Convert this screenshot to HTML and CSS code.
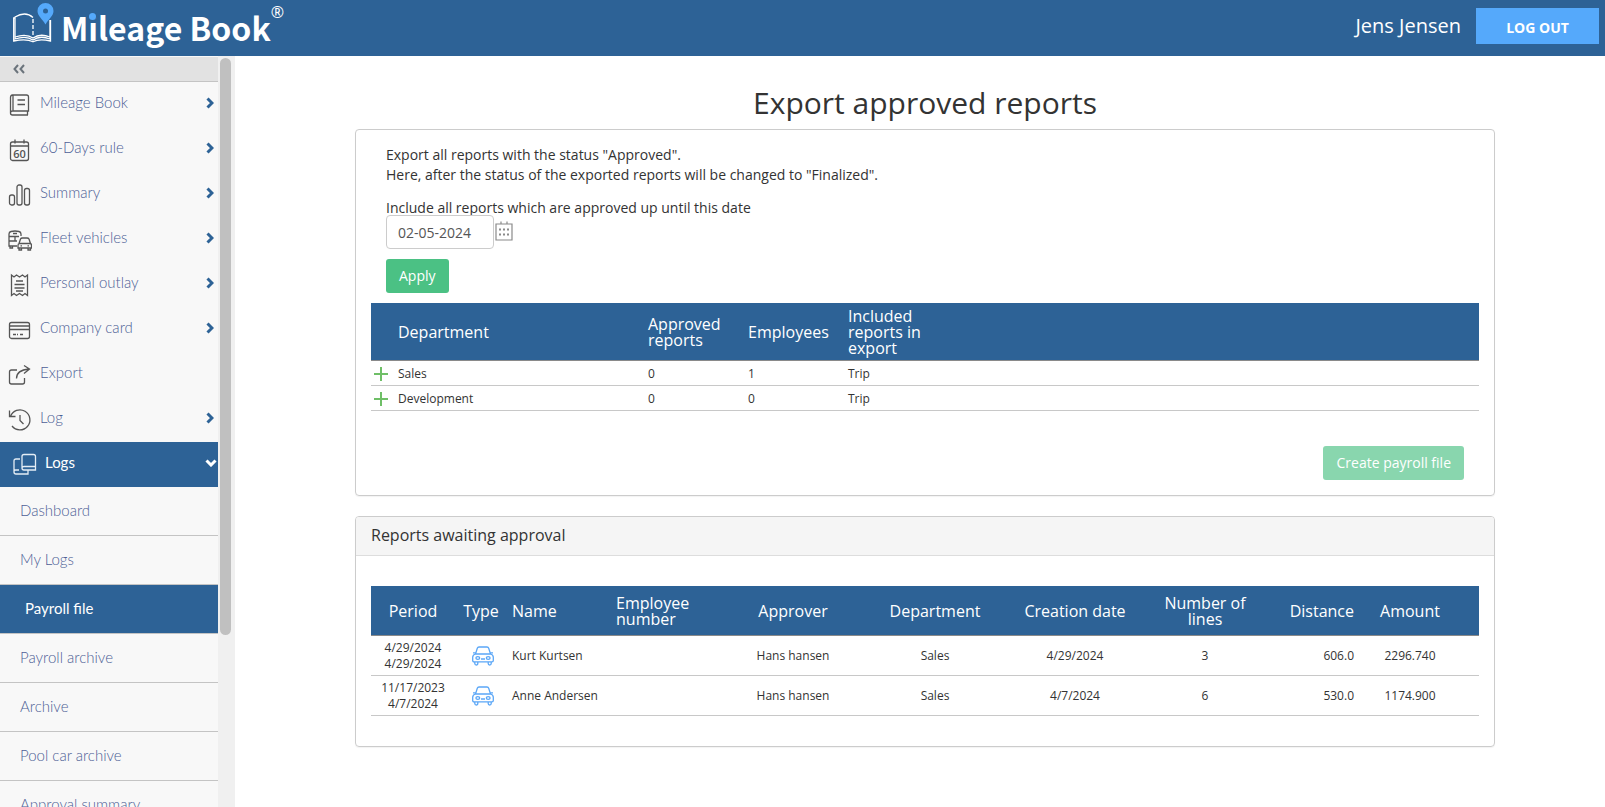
FILE: index.html
```html
<!DOCTYPE html>
<html lang="en">
<head>
  <meta charset="UTF-8">
  <meta name="viewport" content="width=device-width, initial-scale=1.0">
  <title>Mileage Book - Payroll file</title>
  <link rel="stylesheet" href="styles.css">
</head>
<body>
  <svg class="sprite" aria-hidden="true">
    <symbol id="chevron" viewBox="0 0 8 12">
      <path d="M1.5 1.5 6 6 1.5 10.500" fill="none" stroke="currentColor" stroke-width="3"/>
    </symbol>
    <symbol id="plus" viewBox="0 0 14 14">
      <path d="M7 0v14M0 7h14" fill="none" stroke="#6fbf67" stroke-width="2"/>
    </symbol>
    <symbol id="car" viewBox="0 0 22 20">
      <g fill="none" stroke="#5ba7f7" stroke-width="1.300" stroke-linejoin="round">
        <path d="M3.500 8 5.300 2.200Q5.700 1 7 1h8q1.300 0 1.700 1.200L18.500 8"/>
        <path d="M3.500 8h15q2.800.8 2.800 3.300v3.200q0 1.300-1.300 1.300H2q-1.300 0-1.300-1.300v-3.200Q.7 8.800 3.500 8z"/>
        <path d="M1 6.800h2.800M18.200 6.800H21M9 13h4"/>
        <ellipse cx="5.800" cy="12" rx="1.900" ry="1.300"/>
        <ellipse cx="16.200" cy="12" rx="1.900" ry="1.300"/>
        <path d="M2.800 16v1.500q0 1.500 1.500 1.500t1.500-1.500V16M16.200 16v1.500q0 1.500 1.500 1.500t1.500-1.500V16"/>
      </g>
    </symbol>
  </svg>

  <header class="topbar">
    <a class="logo" href="#">
      <svg class="logo-icon" width="42" height="42" viewBox="0 0 42 42" fill="none" stroke="#fff" stroke-width="1.300">
        <path d="M21 14.500C16 10 9 10.500 3 14v22c6-2 13-2.500 18 1 5-3.500 12-3 17-1V17"/>
        <path d="M3 34c6-2 13-2.500 18 1 5-3.500 12-3 17-1"/>
        <path d="M3 15H1.700v23c7-1.500 14-2 19.300.8 5-2.800 11-2.300 17.500-.8V17"/>
        <path d="M21 16v18" stroke-dasharray="4 2"/>
        <path d="M33.500 0a8 8 0 0 0-8 8c0 5 5 8 8 13.500 3-5.500 8-8.500 8-13.500a8 8 0 0 0-8-8z" fill="#55a9fb" stroke="none"/>
        <circle cx="33.500" cy="8" r="2.500" fill="#2d6296" stroke="none"/>
      </svg>
      <span class="logo-text">M<span class="logo-i">i</span>leage Book</span><span class="logo-reg">®</span>
    </a>
    <div class="user">
      <span class="user-name">Jens Jensen</span>
      <button class="logout" type="button">LOG OUT</button>
    </div>
  </header>

  <div class="page">
    <nav class="sidebar">
      <div class="menu">
        <button class="collapse" type="button" aria-label="Collapse menu">
          <svg width="12" height="10" viewBox="0 0 12 10"><path d="M5 1 1.500 5 5 9M11 1 7.500 5 11 9" fill="none" stroke="#6b747c" stroke-width="2"/></svg>
        </button>
        <a class="item" href="#">
          <svg class="icon" viewBox="0 0 24 24"><path d="M5 18V2H4.500Q2.500 2 2.500 4.500V20q0 2 2 2H20M5 2h13.500q2 0 2 2v14H4.500q-2 0-2 2M19.500 18v4M9.500 7H17M9.500 11.500H17"/></svg>
          <span>Mileage Book</span><svg class="arrow"><use href="#chevron"/></svg>
        </a>
        <a class="item" href="#">
          <svg class="icon" viewBox="0 0 24 24"><rect x="2.500" y="4" width="18" height="18.500" rx="2"/><path d="M2.500 8h18M7 1.500v4M16 1.500v4"/><text class="icon-text" x="11.500" y="19.500">60</text></svg>
          <span>60-Days rule</span><svg class="arrow"><use href="#chevron"/></svg>
        </a>
        <a class="item" href="#">
          <svg class="icon" viewBox="0 0 24 24"><rect x="1.500" y="12" width="5" height="10" rx="2"/><rect x="9" y="2" width="5" height="20" rx="2"/><rect x="16.500" y="5.500" width="5" height="16.500" rx="2"/></svg>
          <span>Summary</span><svg class="arrow"><use href="#chevron"/></svg>
        </a>
        <a class="item" href="#">
          <svg class="icon" viewBox="0 0 24 24"><path d="M9 18H1V6q0-2 2-2.500 4-1 8 0 2 .5 2 2.500v2M1 8.500h10M5 5.500h4M1 13h8M7 8.500V13M2 18v2h2.500v-2M11 15.500l1.500-4.500q.5-1 2-1h4.500q1.500 0 2 1l1.500 4.500M10 17.500q0-2 1.500-2h10.500q1.500 0 1.500 2V20H10zM11 20v2h2.500v-2M20 20v2h2.500v-2M12.500 17.800H14M19.500 17.800H21"/></svg>
          <span>Fleet vehicles</span><svg class="arrow"><use href="#chevron"/></svg>
        </a>
        <a class="item" href="#">
          <svg class="icon" viewBox="0 0 24 24"><path d="M3.500 2v20.500l2.500-2 2.500 2 3-2 3 2 2.500-2 2.500 2V2L17 4l-2.500-2-3 2-3-2L6 4zM8 8h7M6.500 11.500h10M6.500 15h10M8 18h7"/></svg>
          <span>Personal outlay</span><svg class="arrow"><use href="#chevron"/></svg>
        </a>
        <a class="item" href="#">
          <svg class="icon" viewBox="0 0 24 24"><rect x="1.500" y="4.500" width="20" height="16" rx="2"/><path d="M1.500 8h20M1.500 11.500h20M5 16.500h3M9 16.500h1M12 16.500h3"/></svg>
          <span>Company card</span><svg class="arrow"><use href="#chevron"/></svg>
        </a>
        <a class="item" href="#">
          <svg class="icon" viewBox="0 0 24 24"><path d="M9 7H3.500q-2 0-2 2v10q0 2 2 2h11q2 0 2-2v-4M8.500 15.500q0-8.500 12.500-9.500M16 2.500 21.500 6 16 10.500"/></svg>
          <span>Export</span>
        </a>
        <a class="item" href="#">
          <svg class="icon" viewBox="0 0 24 24"><path d="M2.500 8.500A10 10 0 1 1 4 18M1.500 2.500v6h6M12 7v5.500l3.500 3.500"/></svg>
          <span>Log</span><svg class="arrow"><use href="#chevron"/></svg>
        </a>
        <a class="item open" href="#">
          <svg class="icon" viewBox="0 0 24 24"><path d="M9 15V3.500q0-2 2-2h9.500q2 0 2 2V17H11q-2 0-2-2 0-1.500 2-1.500h11.500M7 6H3Q1 6 1 8v11q0 2 2 2h12v-4M1 18.500q0-1.500 1.500-1.500H6"/></svg>
          <span>Logs</span><svg class="arrow"><use href="#chevron"/></svg>
        </a>
        <a class="subitem" href="#">Dashboard</a>
        <a class="subitem" href="#">My Logs</a>
        <a class="subitem active" href="#">Payroll file</a>
        <a class="subitem" href="#">Payroll archive</a>
        <a class="subitem" href="#">Archive</a>
        <a class="subitem" href="#">Pool car archive</a>
        <a class="subitem" href="#">Approval summary</a>
      </div>
      <div class="scrollbar"><div class="thumb"></div></div>
    </nav>

    <main class="content">
      <h1>Export approved reports</h1>

      <section class="panel export">
        <div class="export-form">
          <p>Export all reports with the status "Approved".<br>Here, after the status of the exported reports will be changed to "Finalized".</p>
          <label for="untilDate">Include all reports which are approved up until this date</label>
          <div class="date-row">
            <input id="untilDate" type="text" value="02-05-2024">
            <button class="calendar" type="button" aria-label="Pick a date">
              <svg width="18" height="20" viewBox="0 0 18 20" fill="none" stroke="#8a8a8a"><path d="M1 3h16v16H1zM6 .5v3M12 .5v3" stroke-width="1.200"/><path d="M4 8.500h10M4 13.500h10" stroke-width="2" stroke-dasharray="2"/></svg>
            </button>
          </div>
          <button class="btn" type="button">Apply</button>
        </div>

        <table class="departments">
          <colgroup><col class="w-plus"><col class="w-dept"><col class="w-num"><col class="w-num"><col class="w-num"><col></colgroup>
          <thead>
            <tr><th></th><th>Department</th><th>Approved reports</th><th>Employees</th><th>Included reports in export</th><th></th></tr>
          </thead>
          <tbody>
            <tr><td><button class="expand" type="button" aria-label="Expand Sales"><svg><use href="#plus"/></svg></button></td><td>Sales</td><td>0</td><td>1</td><td>Trip</td><td></td></tr>
            <tr><td><button class="expand" type="button" aria-label="Expand Development"><svg><use href="#plus"/></svg></button></td><td>Development</td><td>0</td><td>0</td><td>Trip</td><td></td></tr>
          </tbody>
        </table>

        <div class="actions">
          <button class="btn" type="button" disabled>Create payroll file</button>
        </div>
      </section>

      <section class="panel">
        <h2>Reports awaiting approval</h2>
        <div class="panel-body">
          <table class="awaiting">
            <colgroup><col class="c-period"><col class="c-type"><col class="c-name"><col class="c-empno"><col class="c-approver"><col class="c-dept"><col class="c-created"><col class="c-lines"><col class="c-distance"><col class="c-amount"><col></colgroup>
            <thead>
              <tr><th>Period</th><th>Type</th><th class="left">Name</th><th class="left">Employee number</th><th>Approver</th><th>Department</th><th>Creation date</th><th>Number of lines</th><th class="right">Distance</th><th>Amount</th><th></th></tr>
            </thead>
            <tbody>
              <tr><td>4/29/2024<br>4/29/2024</td><td><svg class="car"><use href="#car"/></svg></td><td class="left">Kurt Kurtsen</td><td></td><td>Hans hansen</td><td>Sales</td><td>4/29/2024</td><td>3</td><td class="right">606.0</td><td>2296.740</td><td></td></tr>
              <tr><td>11/17/2023<br>4/7/2024</td><td><svg class="car"><use href="#car"/></svg></td><td class="left">Anne Andersen</td><td></td><td>Hans hansen</td><td>Sales</td><td>4/7/2024</td><td>6</td><td class="right">530.0</td><td>1174.900</td><td></td></tr>
            </tbody>
          </table>
        </div>
      </section>
    </main>
  </div>
</body>
</html>
```
FILE: styles.css
```css
* {
  box-sizing: border-box;
}
body {
  display: flex;
  flex-direction: column;
  height: 100vh;
  margin: 0;
  overflow: hidden;
  background-color: #fff;
  color: #333;
  font-family: "Open Sans", "Noto Sans", sans-serif;
  font-size: 14px;
  line-height: 20px;
}
button, input {
  font-family: inherit;
  font-size: 14px;
}
button {
  cursor: pointer;
}
a {
  text-decoration: none;
}
.sprite {
  display: none;
}

/* top bar */
.topbar {
  display: flex;
  flex-shrink: 0;
  justify-content: space-between;
  height: 56px;
  padding-right: 6px;
  background-color: #2d6296;
  color: #fff;
}
.logo {
  display: flex;
  padding: 3px 0 0 12px;
  color: #fff;
}
.logo-text {
  margin-left: 7px;
  font-family: "Noto Sans CJK SC", "Open Sans", sans-serif;
  font-size: 32px;
  font-weight: bold;
  line-height: 48px;
}
.logo-i {
  position: relative;
}
.logo-i::before {
  content: "";
  position: absolute;
  top: 9px;
  left: 1px;
  width: 7px;
  height: 7px;
  border-radius: 50%;
  background-color: #55a9fb;
  box-shadow: 0 0 0 1px #2d6296;
}
.logo-reg {
  font-size: 16px;
  line-height: 18px;
}
.user {
  display: flex;
  align-items: center;
  gap: 15px;
  padding-bottom: 4px;
}
.user-name {
  font-size: 20px;
}
.logout {
  width: 123px;
  height: 36px;
  padding-top: 4px;
  border: none;
  background-color: #55a9fb;
  color: #fff;
  font-weight: 700;
}

/* sidebar */
.page {
  display: flex;
  flex: 1;
  min-height: 0;
}
.sidebar {
  display: flex;
  flex-shrink: 0;
  width: 235px;
  overflow: hidden;
}
.menu {
  width: 218px;
  padding-top: 1px;
  background-color: #f8f8f8;
}
.collapse {
  display: flex;
  align-items: center;
  width: 100%;
  height: 25px;
  padding: 0 13px;
  border: none;
  border-bottom: 1px solid #c4c4c4;
  background-color: #e2e2e2;
}
.item {
  display: flex;
  align-items: center;
  height: 45px;
  padding: 0 4px 0 8px;
  color: #4d5f96;
  font-family: Lato, sans-serif;
  font-size: 15px;
  font-weight: 300;
}
.item span {
  flex: 1;
  padding: 0 0 5px 8px;
}
.icon {
  width: 24px;
  height: 24px;
  fill: none;
  stroke: #555;
  stroke-width: 1.3;
}
.icon-text {
  fill: #555;
  stroke: none;
  font-family: "Open Sans", sans-serif;
  font-size: 11px;
  font-weight: 600;
  text-anchor: middle;
}
.arrow {
  width: 8px;
  height: 12px;
  margin-bottom: 3px;
  color: #2d6296;
}
.item.open {
  padding: 0 3px 0 13px;
  background-color: #2d6296;
  color: #fff;
  font-weight: 400;
}
.item.open .icon {
  stroke: #e4edf5;
}
.item.open .arrow {
  color: #fff;
  transform: rotate(90deg);
}
.subitem {
  display: block;
  height: 49px;
  padding-left: 20px;
  border-bottom: 1px solid #c4c4c4;
  color: #4d5f96;
  font-family: Lato, sans-serif;
  font-size: 15px;
  font-weight: 300;
  line-height: 46px;
}
.subitem.active {
  padding-left: 25px;
  background-color: #2d6296;
  color: #fff;
  font-weight: 400;
}
.scrollbar {
  flex: 1;
  padding: 2px 4px 0 2px;
  background-color: #f0f0f0;
}
.thumb {
  height: 77%;
  border-radius: 6px;
  background-color: #c0c0c0;
}

/* content */
.content {
  flex: 1;
  padding: 30px 110px 0 120px;
}
h1 {
  margin: 0 0 10px;
  font-size: 30px;
  font-weight: 400;
  line-height: 33px;
  text-align: center;
}
.panel {
  margin-bottom: 20px;
  border: 1px solid #ccc;
  border-radius: 4px;
  box-shadow: 0 1px 1px rgba(0, 0, 0, 0.05);
}
.export {
  padding: 15px;
}
.export-form {
  padding: 0 15px 10px;
}
.export-form p {
  margin: 0 0 15px;
}
.export-form label {
  display: block;
  margin-bottom: -1px;
  line-height: 16px;
}
.date-row {
  display: flex;
  align-items: center;
  gap: 1px;
  margin-bottom: 10px;
}
.date-row input {
  width: 108px;
  height: 34px;
  padding: 6px 11px;
  border: 1px solid #ccc;
  border-radius: 4px;
  color: #555;
}
.calendar {
  display: flex;
  padding: 0 0 2px;
  border: none;
  background: none;
}
.btn {
  height: 34px;
  padding: 5px 13px 7px;
  border: none;
  border-radius: 3px;
  background-color: #4bc184;
  color: #fff;
}
.btn:disabled {
  opacity: 0.65;
}
.actions {
  padding: 35px 15px 0;
  text-align: right;
}
h2 {
  margin: 0;
  padding: 8px 15px 10px;
  border-bottom: 1px solid #ddd;
  border-radius: 3px 3px 0 0;
  background-color: #f5f5f5;
  font-size: 16px;
  font-weight: 400;
}
.panel-body {
  padding: 30px 15px;
}

/* tables */
table {
  width: 100%;
  border-collapse: separate;
  border-spacing: 0;
  table-layout: fixed;
}
th {
  border-bottom: 1px solid #8a8a8a;
  background-color: #2d6296;
  color: #fff;
  font-size: 16px;
  font-weight: 400;
  line-height: 16px;
}
td {
  border-bottom: 1px solid #c8c8c8;
  font-size: 12px;
  line-height: 16px;
}
.departments th, .departments td {
  text-align: left;
}
.departments th {
  padding: 5px 2px 4px;
}
.departments td {
  padding: 5px 2px 3px;
}
.w-plus { width: 25px; }
.w-dept { width: 250px; }
.w-num { width: 100px; }
.expand {
  display: block;
  padding: 0 0 0 1px;
  border: none;
  background: none;
}
.expand svg {
  display: block;
  width: 14px;
  height: 14px;
}
.awaiting th {
  padding: 9px 5px 8px;
}
.awaiting td {
  padding: 4px 5px 3px;
  text-align: center;
}
.awaiting .left {
  text-align: left;
}
.awaiting .right {
  text-align: right;
}
.c-period { width: 84px; }
.c-type { width: 52px; }
.c-name { width: 104px; }
.c-empno { width: 112px; }
.c-approver { width: 140px; }
.c-dept { width: 144px; }
.c-created { width: 136px; }
.c-lines { width: 124px; }
.c-distance { width: 92px; }
.c-amount { width: 102px; }
.car {
  display: block;
  width: 22px;
  height: 20px;
  margin: 0 8px 0 auto;
}
```
